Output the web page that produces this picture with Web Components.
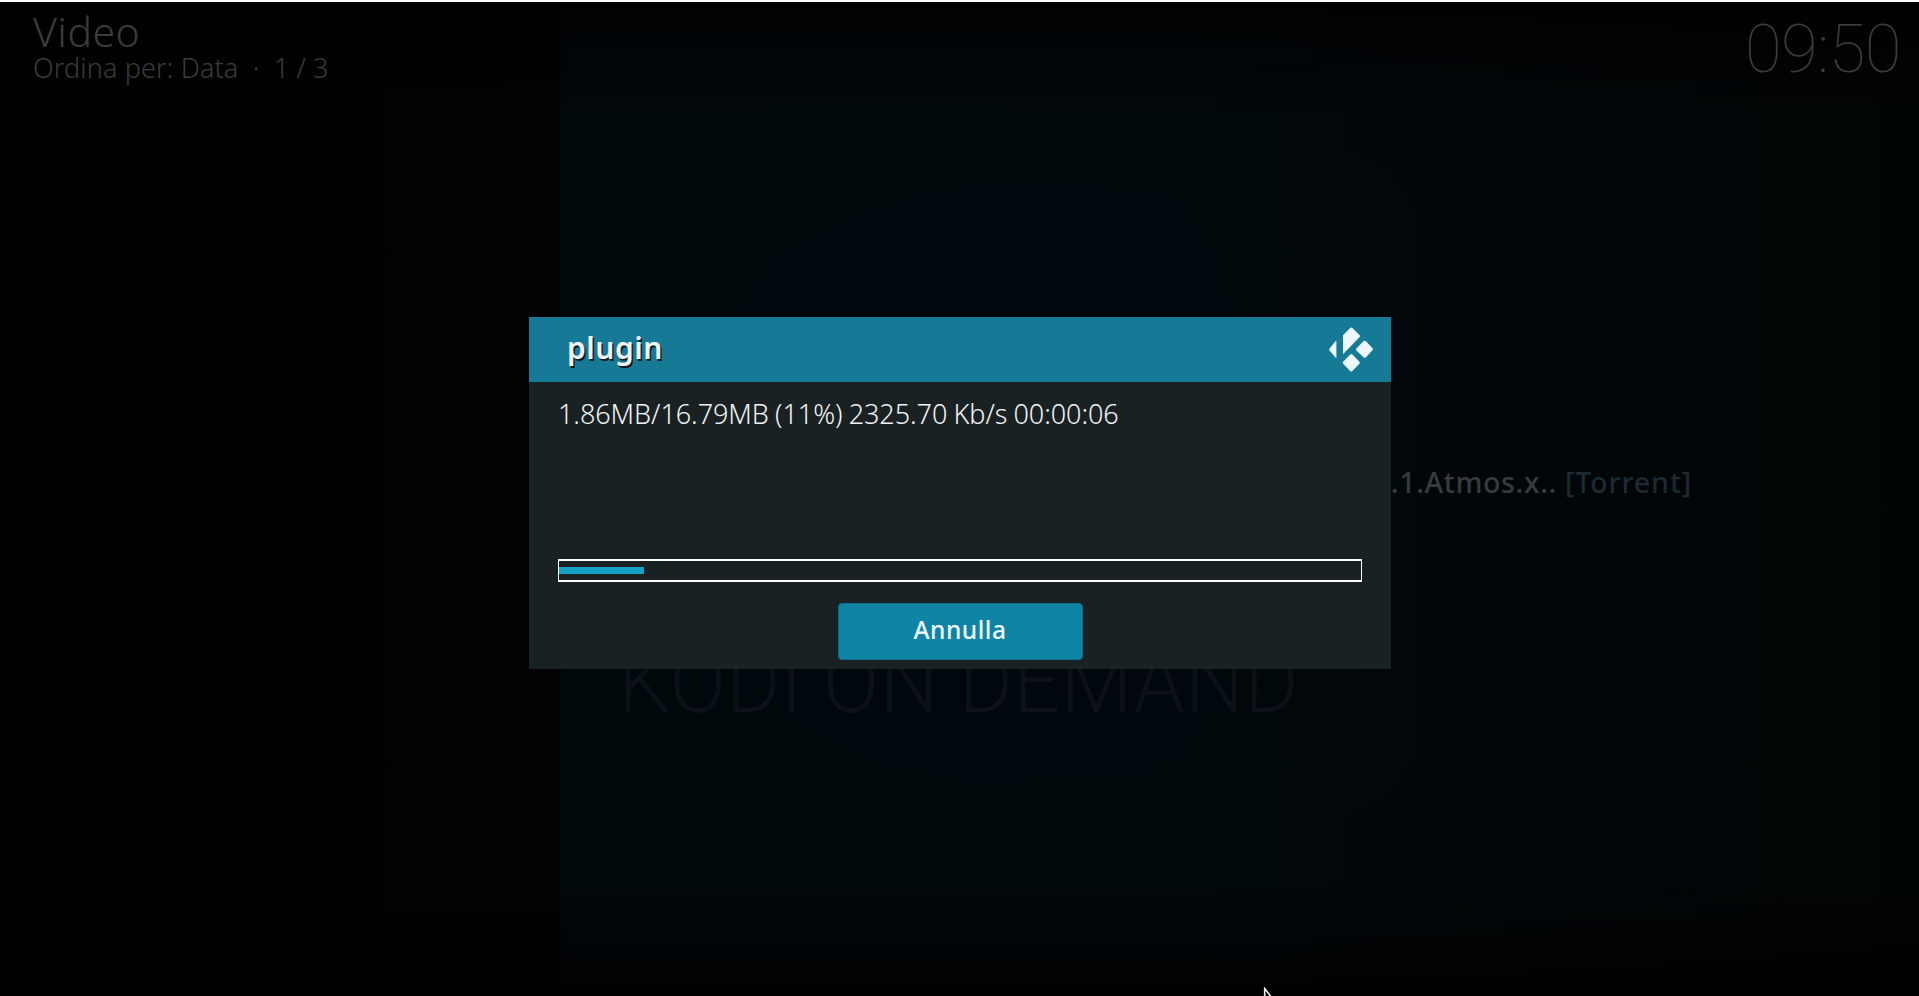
<!DOCTYPE html>
<html lang="it">
<head>
<meta charset="utf-8">
<title>Video</title>
<style>
html,body{margin:0;height:100%;overflow:hidden;background:#000}
body{font-family:"Noto Sans","Open Sans",sans-serif}
</style>
</head>
<body>
<media-screen>
  <screen-header slot="header" heading="Video" clock="09:50">Ordina per: Data &nbsp;·&nbsp; 1 / 3</screen-header>
  <list-row slot="list" tag="[Torrent]">.1.Atmos.x..</list-row>
  <back-drop slot="backdrop">KODI ON DEMAND</back-drop>
  <progress-dialog slot="dialog" heading="plugin">
    1.86MB/16.79MB (11%) 2325.70 Kb/s 00:00:06
    <progress-meter slot="meter"></progress-meter>
    <dialog-button slot="actions">Annulla</dialog-button>
  </progress-dialog>
  <mouse-pointer slot="pointer"></mouse-pointer>
</media-screen>
<script>
const define = (name, html) => customElements.define(name, class extends HTMLElement {
  constructor() {
    super();
    this.attachShadow({mode: 'open'}).innerHTML = html;
  }
  connectedCallback() {
    this.shadowRoot.querySelectorAll('[data-attr]').forEach(el => {
      el.textContent = this.getAttribute(el.dataset.attr) || '';
    });
  }
});

define('media-screen', `<style>
:host{display:flex;flex-direction:column;position:relative;box-sizing:border-box;width:100vw;height:100vh;overflow:hidden;border-top:2px solid #fff;
background:linear-gradient(180deg,rgba(0,0,0,.8),transparent 12%,transparent 88%,rgba(0,0,0,.85)),
linear-gradient(90deg,#010101 0,#020203 561px,transparent 561px),
linear-gradient(90deg,transparent 60%,rgba(1,3,3,.8) 100%),
radial-gradient(ellipse 620px 460px at 1060px 480px,#01070e,#01080b 100%)}
main{flex:1;display:flex;flex-direction:column}
</style><slot name="backdrop"></slot><slot name="header"></slot><main><slot name="list"></slot></main><slot name="dialog"></slot><slot name="pointer"></slot>`);

define('screen-header', `<style>
:host{display:flex;justify-content:space-between;height:98px;padding:0 18px 0 33px;color:#3b3b3c;position:relative}
.t{padding-top:1px;font-weight:300}
h1{margin:0;font-size:41px;line-height:56px;font-weight:300;height:46px;letter-spacing:.5px}
p{margin:0;font-size:27px;line-height:37px;white-space:nowrap;letter-spacing:.12px}
time{font:100 67px/78px Roboto,sans-serif;padding-top:8px;letter-spacing:-.5px}
</style><div class="t"><h1 data-attr="heading"></h1><p><slot></slot></p></div><time data-attr="clock"></time>`);

define('list-row', `<style>
:host{display:flex;justify-content:flex-end;gap:8px;margin-top:363px;padding-right:227px;font:500 28.5px/38px "Noto Sans",sans-serif;letter-spacing:.65px;color:#393a3b;position:relative}
span{color:#1b2a33;letter-spacing:.9px}
</style><div><slot></slot></div><span data-attr="tag"></span>`);

define('back-drop', `<style>
:host{position:absolute;left:618px;top:629px;font:300 87px/102px Roboto,sans-serif;color:#0b1116;white-space:nowrap;transform:scaleX(.956);transform-origin:7px 0}
</style><slot></slot>`);

define('progress-dialog', `<style>
:host{position:absolute;left:529px;top:315px;width:862px;height:352px;display:flex;flex-direction:column;background:#1a2122;color:#f0f2f3}
header{height:65px;flex:none;display:flex;align-items:center;justify-content:space-between;background:#167a97;padding:0 18px 0 38px}
h2{margin:0;font-size:30px;line-height:41px;font-weight:600;letter-spacing:.5px;text-shadow:1.5px 1.5px 0 #101a1e;position:relative;top:-2px}
svg{width:44px;height:45px}
.b{flex:1;padding:0 29px;display:flex;flex-direction:column}
.m{font-size:27px;line-height:37px;font-weight:300;height:164px;padding-top:13px;white-space:nowrap;letter-spacing:-.06px;word-spacing:-.8px}
footer{display:flex;justify-content:center;margin-top:21px}
</style><header><h2 data-attr="heading"></h2>
<svg viewBox="0 0 44 45" fill="#ecf7fa"><path d="M7.4 13.8V31Q7.2 31.3 6.9 31L.6 23.6Q-.2 22.4.6 21.4L6.9 13.8Q7.2 13.5 7.4 13.8Z"/><path d="M14 26.5V8.2L21.2.9Q22.3 0 23.4.9L30.7 8.2Q31.5 9.2 30.7 10.1L14.7 26.5Q14.3 27 14 26.5Z"/><path d="M27.4 21.5L34.7 14.1Q35.7 13.2 36.7 14.1L43.5 21.2Q44.4 22.2 43.5 23.2L36.7 30.4Q35.7 31.3 34.7 30.4L27.4 23.4Q26.5 22.4 27.4 21.5Z"/><path d="M14.1 34.8L21.2 27.6Q22.3 26.6 23.4 27.6L30.4 34.8Q31.2 35.8 30.4 36.8L23.4 44Q22.3 45 21.2 44L14.1 36.8Q13.3 35.8 14.1 34.8Z"/></svg></header>
<div class="b"><div class="m"><slot></slot></div><slot name="meter"></slot><footer><slot name="actions"></slot></footer></div>`);

define('progress-meter', `<style>
:host{display:flex;align-items:center;box-sizing:border-box;height:23px;border:solid #fff;border-width:2px 1.5px}
i{width:85px;height:7px;background:#15a0c6}
</style><i></i>`);

define('dialog-button', `<style>
:host{display:flex;justify-content:center;align-items:center;box-sizing:border-box;width:245px;height:57px;padding-bottom:4px;border-radius:4px;background:#1084a5;border:1px solid #116e88;color:#eff9fc;font:500 24.5px/34px "Noto Sans",sans-serif;letter-spacing:.55px}
</style><slot></slot>`);

define('mouse-pointer', `<style>
:host{position:absolute;left:1263px;top:985px;width:20px;height:20px}
svg{display:block}
</style><svg width="20" height="28"><path d="M1.7 1.5V25L7 20H16Z" fill="#000" stroke="#eee" stroke-width="1.6"/></svg>`);
</script>
</body>
</html>
